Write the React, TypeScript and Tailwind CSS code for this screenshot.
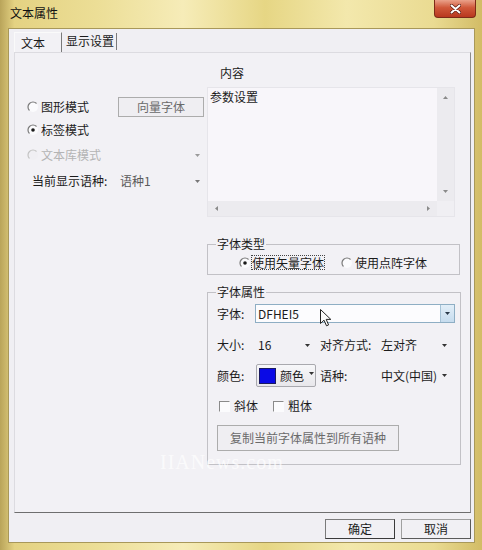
import React from "react";

function Radio({ checked = false, disabled = false }: { checked?: boolean; disabled?: boolean }) {
  return (
    <svg width="12" height="12" viewBox="0 0 12 12" className="shrink-0">
      <circle cx="6" cy="6" r="5" fill={disabled ? "#f0eff3" : "#fbfbfd"} />
      <path
        d="M9.54 2.46 A5 5 0 0 0 2.46 9.54"
        fill="none"
        stroke={disabled ? "#c4c4c4" : "#7a7a7a"}
        strokeWidth="1.2"
      />
      {checked && <circle cx="6" cy="6" r="1.8" fill="#1a1a1a" />}
    </svg>
  );
}

function Caret({ color = "#333" }: { color?: string }) {
  return (
    <svg width="5" height="3" viewBox="0 0 5 3" className="shrink-0">
      <path d="M0 0H5L2.5 3Z" fill={color} />
    </svg>
  );
}

function Check() {
  return <div className="w-[11px] h-[11px] shrink-0 border-t border-l border-[#8a8a8a] border-r border-b border-r-[#fbfbfd] border-b-[#fbfbfd] bg-[#fbfbfd]" />;
}

export default function App() {
  return (
    <div className="relative w-[482px] h-[550px] overflow-hidden flex flex-col font-['Noto_Sans_CJK_SC','Noto_Sans',sans-serif] text-[12px] leading-[14px] text-[#1b1b1b] bg-[linear-gradient(90deg,#b9a45a_0%,#e4d282_3%,#ecde96_20%,#f6ecb8_38%,#e6d684_55%,#f3e8ac_72%,#eadb92_90%,#d2bc66_100%)]">
      {/* title bar */}
      <div className="h-[28px] shrink-0 flex items-start justify-between">
        <div className="pl-[10px] pt-[6px] text-[#111]">文本属性</div>
        <div className="mr-[6px] w-[42px] h-[18px] rounded-b-[4px] border border-t-0 border-[#7d2a18] bg-[linear-gradient(#eaa18a,#d0583a_45%,#b8381f)] flex items-center justify-center">
          <svg width="11" height="10" viewBox="0 0 11 10">
            <path d="M1.5 1.5L9.5 8.5M9.5 1.5L1.5 8.5" stroke="#5a1a10" strokeWidth="3.4" strokeLinecap="round" />
            <path d="M1.5 1.5L9.5 8.5M9.5 1.5L1.5 8.5" stroke="#ffffff" strokeWidth="2" strokeLinecap="round" />
          </svg>
        </div>
      </div>

      {/* client area */}
      <div className="ml-[8px] w-[467px] h-[515px] border border-[#a8985a] bg-[#f0eff3] flex flex-col">
        {/* tabs */}
        <div className="pl-[5px] pt-[3px] h-[23px] flex items-end">
          <div className="w-[48px] h-[20px] bg-[#f2f1f5] border-t border-l border-[#fafafa] border-r border-r-[#7a7a7a] pl-[6px] pt-[3px]">文本</div>
          <div className="w-[55px] h-[17px] border-r border-[#7a7a7a] pl-[4px] pt-[1px] mb-[2px]">显示设置</div>
        </div>

        {/* tab panel */}
        <div className="ml-[5px] w-[457px] h-[461px] bg-[#f2f1f5] border-t border-l border-[#dcdbe0] border-r border-r-[#8c8c8c] border-b border-b-[#6e6e6e] flex">
          {/* left column */}
          <div className="w-[192px] flex flex-col">
            <div className="mt-[44px] h-[20px] flex items-center pl-[12px]">
              <div className="w-[91px] flex items-center gap-[2px]">
                <Radio />
                <span>图形模式</span>
              </div>
              <div className="w-[86px] h-[20px] border border-[#acacac] bg-[#efeef2] flex items-center justify-center text-[#6a6a6a]">向量字体</div>
            </div>
            <div className="mt-[3px] h-[20px] flex items-center pl-[12px]">
              <div className="w-[91px] flex items-center gap-[2px]">
                <Radio checked />
                <span>标签模式</span>
              </div>
            </div>
            <div className="mt-[5px] h-[20px] flex items-center pl-[12px]">
              <div className="w-[91px] flex items-center gap-[2px]">
                <Radio disabled />
                <span className="text-[#b4b4b4]">文本库模式</span>
              </div>
              <div className="w-[86px] h-[20px] flex items-center justify-end pr-[4px]">
                <Caret color="#9a9a9a" />
              </div>
            </div>
            <div className="mt-[6px] h-[20px] flex items-center pl-[12px]">
              <div className="w-[91px] pl-[5px]">当前显示语种:</div>
              <div className="w-[86px] h-[20px] flex items-center justify-between pl-[2px] pr-[4px]">
                <span className="text-[#5a5a5a]">语种1</span>
                <Caret color="#777" />
              </div>
            </div>
          </div>

          {/* right column */}
          <div className="w-[254px] flex flex-col">
            <div className="mt-[13px] pl-[13px] h-[14px]">内容</div>
            <div className="mt-[7px] w-[248px] h-[130px] border border-[#e6e5ea] bg-[#f8f6fa] flex flex-col">
              <div className="flex flex-1">
                <div className="flex-1 pl-[2px] pt-[2px]">参数设置</div>
                <div className="w-[17px] bg-[#ecebef] flex flex-col items-center justify-between py-[8px]">
                  <svg width="5" height="3" viewBox="0 0 5 3"><path d="M0 3H5L2.5 0Z" fill="#8a8a8a" /></svg>
                  <Caret color="#8a8a8a" />
                </div>
              </div>
              <div className="h-[15px] flex">
                <div className="flex-1 bg-[#ecebef] flex items-center justify-between px-[7px]">
                  <svg width="3" height="5" viewBox="0 0 3 5"><path d="M3 0V5L0 2.5Z" fill="#8a8a8a" /></svg>
                  <svg width="3" height="5" viewBox="0 0 3 5"><path d="M0 0V5L3 2.5Z" fill="#8a8a8a" /></svg>
                </div>
                <div className="w-[17px] bg-[#f0eff3]" />
              </div>
            </div>

            {/* 字体类型 */}
            <div className="relative mt-[27px] w-[253px] h-[31px] border border-[#c2c1c6]">
              <span className="absolute -top-[8px] left-[8px] px-[1px] bg-[#f2f1f5]">字体类型</span>
              <div className="pt-[10px] pl-[31px] flex items-center">
                <Radio checked />
                <span className="ml-[0px] border border-dotted border-[#444] leading-[13px]">使用矢量字体</span>
                <div className="ml-[16px]"><Radio /></div>
                <span className="ml-[2px]">使用点阵字体</span>
              </div>
            </div>

            {/* 字体属性 */}
            <div className="relative mt-[17px] w-[254px] h-[173px] border border-[#c2c1c6] flex flex-col">
              <span className="absolute -top-[8px] left-[8px] px-[1px] bg-[#f2f1f5]">字体属性</span>
              <div className="mt-[11px] flex items-center">
                <div className="w-[47px] pl-[9px]">字体:</div>
                <div className="w-[200px] h-[19px] border border-[#8eaec4] bg-[#fcfcfe] flex">
                  <div className="flex-1 pl-[2px] flex items-center">DFHEI5</div>
                  <div className="w-[14px] bg-[linear-gradient(#e2eef8,#c6dcee)] border-l border-[#a6c2d6] flex items-center justify-center">
                    <Caret color="#2a3a4a" />
                  </div>
                </div>
              </div>
              <div className="mt-[12px] h-[20px] flex items-center">
                <div className="w-[47px] pl-[9px]">大小:</div>
                <div className="w-[60px] flex items-center justify-between pl-[3px] pr-[5px]">
                  <span>16</span>
                  <Caret />
                </div>
                <div className="ml-[5px] w-[61px]">对齐方式:</div>
                <div className="w-[70px] flex items-center justify-between pr-[4px]">
                  <span>左对齐</span>
                  <Caret />
                </div>
              </div>
              <div className="mt-[9px] h-[23px] flex items-center">
                <div className="w-[47px] pl-[9px]">颜色:</div>
                <div className="ml-[1px] w-[60px] h-[23px] border border-[#a9a9ae] rounded-[2px] bg-[linear-gradient(#f7f7f9,#e8e7eb)] flex items-center">
                  <div className="ml-[2px] w-[17px] h-[16px] bg-[#0a0ae6] border border-[#1a1a60]" />
                  <span className="ml-[4px]">颜色</span>
                  <div className="ml-[5px] mb-[4px]"><Caret /></div>
                </div>
                <div className="ml-[4px] w-[61px]">语种:</div>
                <div className="w-[70px] flex items-center justify-between pr-[4px]">
                  <span>中文(中国)</span>
                  <Caret />
                </div>
              </div>
              <div className="mt-[12px] h-[14px] flex items-center pl-[11px]">
                <Check />
                <span className="ml-[4px]">斜体</span>
                <div className="ml-[15px]"><Check /></div>
                <span className="ml-[4px]">粗体</span>
              </div>
              <div className="mt-[12px] ml-[9px] w-[182px] h-[26px] border border-[#acacac] bg-[#efeef2] flex items-center justify-center text-[#6a6a6a]">
                复制当前字体属性到所有语种
              </div>
            </div>
          </div>
        </div>

        {/* bottom buttons */}
        <div className="mt-[6px] flex justify-end gap-[6px] pr-[3px]">
          <div className="w-[70px] h-[20px] border border-[#7a7a7a] border-r-[#3a3a3a] border-b-[#3a3a3a] bg-[#f1f0f4] flex items-center justify-center">确定</div>
          <div className="w-[70px] h-[20px] border border-[#a0a0a0] border-r-[#5a5a5a] border-b-[#5a5a5a] bg-[#f1f0f4] flex items-center justify-center">取消</div>
        </div>
      </div>

      {/* mouse cursor */}
      <svg className="absolute left-[320px] top-[309px]" width="12" height="18" viewBox="0 0 12 18">
        <path d="M0.5 0.5V14.5L4 11.2L6.5 16.8L8.6 15.9L6.2 10.4H10.8Z" fill="#fafafa" stroke="#222" strokeWidth="1" strokeLinejoin="round" />
      </svg>

      {/* watermark */}
      <div className="absolute left-[160px] top-[452px] font-['Liberation_Serif',serif] text-[20px] leading-[20px] text-white/70 tracking-[1px]">IIANews.com</div>
    </div>
  );
}
